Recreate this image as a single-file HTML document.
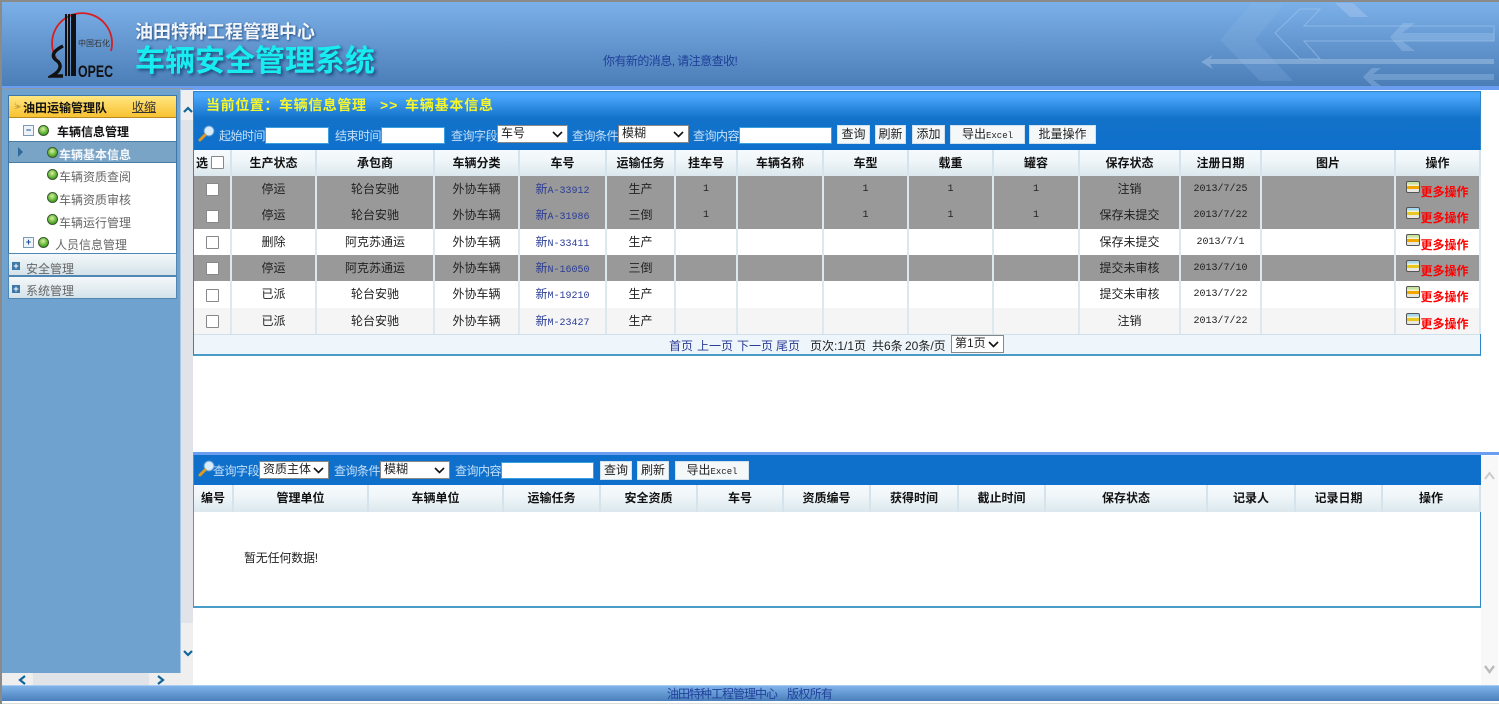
<!DOCTYPE html>
<html lang="zh">
<head>
<meta charset="utf-8">
<title>车辆安全管理系统</title>
<style>
html,body{margin:0;padding:0;background:#fff}
body{width:1499px;height:706px;overflow:hidden;position:relative;font-family:"Liberation Sans","WenQuanYi Zen Hei","Noto Sans CJK SC",sans-serif;font-size:12px;color:#222}
.a{position:absolute;white-space:nowrap}
.t{line-height:16px;height:16px}
table{border-collapse:collapse;table-layout:fixed;position:absolute}
th,td{padding:0 0 2px 0;text-align:center;font-size:12px;overflow:hidden;white-space:nowrap;font-weight:normal}
th{height:26px;background:linear-gradient(#f6fafc,#f0f6f9 40%,#dbe8ee);border-right:2px solid #d5e4ec;font-weight:bold;color:#111;box-sizing:border-box}
td{border-right:2px solid #dbe8f0;box-sizing:border-box}
tr.g td{background:#999;color:#222}
tr.w td{background:#fff}
tr.s td{background:#f5f5f5}
tr td.no{color:#2a3c96;font-size:12px}
.no i{font:normal 10px "Liberation Mono",monospace}
tr td.d{font:10px "Liberation Mono",monospace;padding-bottom:0}
.cb{display:inline-block;width:11px;height:11px;background:#fff;border:1px solid #888;border-radius:1px;vertical-align:middle;position:relative;top:1px}
.more{color:#f00;font-weight:bold;position:relative;top:3px}
.ic{display:inline-block;width:12px;height:10px;border:1px solid #555;border-radius:2px;background:linear-gradient(#c8e4a0 0 25%,#f2f2d0 25% 40%,#f0a800 40% 70%,#e8e8e0 70% 100%);vertical-align:top;position:relative;top:1px}
.ic.b{background:linear-gradient(#a8d8f0 0 25%,#f2f2d0 25% 40%,#e8c820 40% 70%,#e8e8e0 70% 100%)}
.btn{position:absolute;height:17px;line-height:16px;background:#f4f8f8;border:1px solid #cfe0ee;box-sizing:content-box;text-align:center;color:#222}
.inp{position:absolute;height:15px;background:#fff;border:1px solid #3aa0e0}
.sel{position:absolute;height:16px;line-height:14px;background:#fff;border:1px solid #888;padding-left:3px;color:#222;box-sizing:content-box}
.sel svg{position:absolute;right:4px;top:5px}
.lb{position:absolute;color:#c4e0f8;line-height:16px;white-space:nowrap;letter-spacing:-.5px}
.mono{font:9px "Liberation Mono",monospace}
.led{position:absolute;width:9px;height:9px;border-radius:50%;background:radial-gradient(circle at 45% 35%,#d8f09a,#58b030 60%,#2a6a18);border:1px solid #3a5a30}
.m{position:absolute;color:#666;line-height:16px;white-space:nowrap}
.ex{position:absolute;width:9px;height:9px;border:1px solid #7a9ab8;background:#eef3f8;color:#1a4a90;font:bold 9px/8px "Liberation Sans",sans-serif;text-align:center}
.pl{position:absolute;width:8px;height:8px;background:#3f78a8;color:#fff;font:bold 9px/8px "Liberation Sans",sans-serif;text-align:center}
</style>
</head>
<body>

<!-- Header -->
<div class="a" style="left:0;top:0;width:1499px;height:2px;background:#8a8a8a"></div>
<div class="a" style="left:0;top:2px;width:1499px;height:84px;background:linear-gradient(#7cb0e8,#4b7db7)"></div>
<svg class="a" style="left:1100px;top:2px" width="399" height="84" viewBox="0 2 399 84">
<polygon points="152,3 185,3 155,40 193,81 160,81 120,40" fill="#8fb9e8" opacity=".22"/>
<polygon points="235,3 253,3 268,17 250,17" fill="#a8c8f0" opacity=".45"/>
<polygon points="200,9 220,9 204,26 394,26 394,41 204,41 220,59 200,59 175,33" fill="none" stroke="#a5c8ee" stroke-width="1" opacity=".55"/>
<polygon points="101,62 113,55 110,59 394,59 394,64 110,64 113,69" fill="#a5c4e4" opacity=".5"/>
<polygon points="290,37 303,23 315,23 302,33 394,33 394,41 302,41 315,51 302,51" fill="#a5c8ee" opacity=".35"/>
<polygon points="263,77 272,68 281,68 273,74 394,74 394,80 273,80 281,86 272,86" fill="#a5c8ee" opacity=".35"/>
</svg>
<!-- Logo -->
<svg class="a" style="left:48px;top:10px" width="68" height="70" viewBox="0 0 68 70">
<path d="M8 48 A30 30 0 1 1 63 41" fill="none" stroke="#d81e1e" stroke-width="1.8"/>
<rect x="17" y="4" width="2" height="62" fill="#111"/><rect x="20" y="4" width="2" height="62" fill="#111"/><rect x="23" y="4" width="5" height="62" fill="#111"/>
<path d="M15 36 C5 41 3 46 8 50 C14 54 14 60 4 66 L15 66" fill="none" stroke="#111" stroke-width="3.4"/>
<text x="30" y="36" font-size="8" fill="#333" font-family="'Noto Sans CJK SC',sans-serif">中国石化</text>
<text x="30" y="67" font-size="17" font-weight="bold" fill="#111" textLength="35" lengthAdjust="spacingAndGlyphs" font-family="'Liberation Sans',sans-serif">OPEC</text>
</svg>
<div class="a" style="left:135px;top:20px;font-size:18px;line-height:22px;font-weight:bold;color:#f2f6fa;text-shadow:1px 1px 2px #234d80;font-family:'Noto Sans CJK SC',sans-serif">油田特种工程管理中心</div>
<div class="a" style="left:135px;top:39px;font-size:30px;line-height:38px;font-weight:bold;color:#18ecf0;text-shadow:2px 2px 3px #1d4a78;font-family:'Noto Sans CJK SC',sans-serif">车辆安全管理系统</div>
<div class="a t" style="left:603px;top:53px;color:#1f3f9a;letter-spacing:-.55px">你有新的消息, 请注意查收!</div>
<div class="a" style="left:0;top:86px;width:1499px;height:4px;background:#6b9df0"></div>

<!-- Left -->
<div class="a" style="left:0;top:0;width:2px;height:704px;background:#8a8a8a"></div>
<div class="a" style="left:2px;top:88px;width:179px;height:597px;background:#eee"></div>
<div class="a" style="left:2px;top:89px;width:179px;height:584px;background:#70a2cf;border-right:1px solid #a8c8e6;box-sizing:border-box"></div>
<!-- sidebar v scroll -->
<div class="a" style="left:181px;top:90px;width:12px;height:533px;background:#e0e4e8"></div>
<div class="a" style="left:181px;top:623px;width:12px;height:62px;background:#efefef"></div>
<div class="a" style="left:181px;top:90px;width:12px;height:30px;background:#efefef"></div>
<div class="a" style="left:2px;top:88px;width:191px;height:1px;background:#8a98a8"></div>
<svg class="a" style="left:183px;top:106px" width="10" height="8"><path d="M1 6 L5 2 L9 6" fill="none" stroke="#116699" stroke-width="2.2"/></svg>
<svg class="a" style="left:183px;top:649px" width="10" height="8"><path d="M1 2 L5 6 L9 2" fill="none" stroke="#116699" stroke-width="2.2"/></svg>
<!-- sidebar h scroll -->
<div class="a" style="left:33px;top:673px;width:116px;height:12px;background:#e0e4e8"></div>
<svg class="a" style="left:17px;top:675px" width="10" height="11"><path d="M8 1 L3 5 L8 9" fill="none" stroke="#116699" stroke-width="2.2"/></svg>
<svg class="a" style="left:156px;top:675px" width="10" height="11"><path d="M2 1 L7 5 L2 9" fill="none" stroke="#116699" stroke-width="2.2"/></svg>

<!-- sidebar panel -->
<div class="a" style="left:8px;top:95px;width:169px;height:204px;background:#fff;border:1px solid #3f76a8;box-sizing:border-box"></div>
<div class="a" style="left:9px;top:96px;width:167px;height:22px;background:linear-gradient(#ffe680,#f8c232);border-bottom:1px solid #b88a20;box-sizing:border-box"></div>
<div class="a" style="left:14px;top:102px;color:#c8a040;font-size:9px;line-height:9px">⁞▸</div>
<div class="a t" style="left:23px;top:100px;font-weight:bold;color:#111">油田运输管理队</div>
<div class="a t" style="left:132px;top:99px;color:#333;text-decoration:underline">收缩</div>

<div class="ex" style="left:23px;top:125px">−</div>
<div class="led" style="left:38px;top:125px"></div>
<div class="a t" style="left:57px;top:124px;font-weight:bold;color:#111">车辆信息管理</div>

<div class="a" style="left:9px;top:141px;width:167px;height:22px;background:#7aa4c6;border-top:1px solid #4a7ca8;border-bottom:1px solid #4a7ca8;box-sizing:border-box"></div>
<svg class="a" style="left:17px;top:147px" width="7" height="10"><path d="M1 0 L6 5 L1 10Z" fill="#2e6a9e"/></svg>
<div class="led" style="left:47px;top:147px"></div>
<div class="a t" style="left:59px;top:147px;font-weight:bold;color:#f4f8fc">车辆基本信息</div>
<div class="led" style="left:47px;top:169px"></div>
<div class="m" style="left:59px;top:169px">车辆资质查阅</div>
<div class="led" style="left:47px;top:192px"></div>
<div class="m" style="left:59px;top:192px">车辆资质审核</div>
<div class="led" style="left:47px;top:214px"></div>
<div class="m" style="left:59px;top:215px">车辆运行管理</div>
<div class="ex" style="left:23px;top:237px">+</div>
<div class="led" style="left:38px;top:237px"></div>
<div class="m" style="left:55px;top:237px">人员信息管理</div>

<div class="a" style="left:8px;top:253px;width:169px;height:23px;background:linear-gradient(#f4f8fa,#d4e2ea);border:1px solid #4f86b4;box-sizing:border-box"></div>
<div class="pl" style="left:12px;top:262px">+</div>
<div class="m" style="left:26px;top:261px">安全管理</div>
<div class="a" style="left:8px;top:276px;width:169px;height:23px;background:linear-gradient(#f4f8fa,#d4e2ea);border:1px solid #4f86b4;box-sizing:border-box"></div>
<div class="pl" style="left:12px;top:285px">+</div>
<div class="m" style="left:26px;top:283px">系统管理</div>

<!-- Right scrollbar -->
<div class="a" style="left:1481px;top:456px;width:17px;height:229px;background:#f8f8f8"></div>
<svg class="a" style="left:1483px;top:664px" width="13" height="11"><path d="M2 2 L6.5 8 L11 2" fill="none" stroke="#bbb" stroke-width="2.4"/></svg>
<svg class="a" style="left:1483px;top:471px" width="13" height="10"><path d="M2 8 L6.5 2 L11 8" fill="none" stroke="#ccc" stroke-width="2"/></svg>

<!-- Panel 1 -->
<div class="a" style="left:193px;top:91px;width:1288px;height:265px;background:#fff;border:1px solid #2f86c6;border-bottom:2px solid #4a9cc8;box-sizing:border-box"></div>
<div class="a" style="left:194px;top:92px;width:1286px;height:58px;background:linear-gradient(#4aa6fa 0,#4aa6fa 4px,#1272ca 26px,#0f70cc 58px)"></div>
<div class="a" style="left:206px;top:95px;font-size:14px;line-height:20px;font-weight:bold;color:#f6f62a;font-family:'Noto Sans CJK SC',sans-serif;letter-spacing:.6px">当前位置：车辆信息管理</div>
<div class="a" style="left:380px;top:95px;font-size:14px;line-height:20px;font-weight:bold;color:#f6f62a;letter-spacing:1px">&gt;&gt;</div>
<div class="a" style="left:405px;top:95px;font-size:14px;line-height:20px;font-weight:bold;color:#f6f62a;font-family:'Noto Sans CJK SC',sans-serif;letter-spacing:.8px">车辆基本信息</div>

<svg class="a" style="left:198px;top:125px" width="17" height="17" viewBox="0 0 17 17"><circle cx="11" cy="6" r="5" fill="#d8ecfa" stroke="#5a9ad8"/><path d="M7 10 L2 15" stroke="#e09a20" stroke-width="3" stroke-linecap="round"/></svg>
<div class="lb" style="left:219px;top:128px">起始时间</div>
<div class="inp" style="left:265px;top:127px;width:62px"></div>
<div class="lb" style="left:335px;top:128px">结束时间</div>
<div class="inp" style="left:381px;top:127px;width:62px"></div>
<div class="lb" style="left:451px;top:128px">查询字段</div>
<div class="sel" style="left:497px;top:125px;width:66px">车号<svg width="11" height="7"><path d="M1 1 L5.5 5.5 L10 1" fill="none" stroke="#111" stroke-width="1.6"/></svg></div>
<div class="lb" style="left:572px;top:128px">查询条件</div>
<div class="sel" style="left:618px;top:125px;width:66px">模糊<svg width="11" height="7"><path d="M1 1 L5.5 5.5 L10 1" fill="none" stroke="#111" stroke-width="1.6"/></svg></div>
<div class="lb" style="left:693px;top:128px">查询内容</div>
<div class="inp" style="left:739px;top:127px;width:91px"></div>
<div class="btn" style="left:837px;top:125px;width:31px">查询</div>
<div class="btn" style="left:875px;top:125px;width:29px">刷新</div>
<div class="btn" style="left:912px;top:125px;width:31px">添加</div>
<div class="btn" style="left:950px;top:125px;width:73px">导出<span class="mono">Excel</span></div>
<div class="btn" style="left:1029px;top:125px;width:65px">批量操作</div>

<table style="left:194px;top:150px;width:1286px">
<colgroup><col style="width:37px"><col style="width:85px"><col style="width:118px"><col style="width:85px"><col style="width:87px"><col style="width:69px"><col style="width:62px"><col style="width:86px"><col style="width:85px"><col style="width:85px"><col style="width:86px"><col style="width:101px"><col style="width:81px"><col style="width:134px"><col style="width:85px"></colgroup>
<tr><th style="text-align:left;padding-left:2px">选 <span class="cb" style="top:-1px"></span></th><th>生产状态</th><th>承包商</th><th>车辆分类</th><th>车号</th><th>运输任务</th><th>挂车号</th><th>车辆名称</th><th>车型</th><th>载重</th><th>罐容</th><th>保存状态</th><th>注册日期</th><th>图片</th><th>操作</th></tr>
<tr class="g" style="height:26px"><td><span class="cb"></span></td><td>停运</td><td>轮台安驰</td><td>外协车辆</td><td class="no">新<i>A-33912</i></td><td>生产</td><td class="d">1</td><td></td><td class="d">1</td><td class="d">1</td><td class="d">1</td><td>注销</td><td class="d">2013/7/25</td><td></td><td><span class="ic"></span><span class="more">更多操作</span></td></tr>
<tr class="g" style="height:27px"><td><span class="cb"></span></td><td>停运</td><td>轮台安驰</td><td>外协车辆</td><td class="no">新<i>A-31986</i></td><td>三倒</td><td class="d">1</td><td></td><td class="d">1</td><td class="d">1</td><td class="d">1</td><td>保存未提交</td><td class="d">2013/7/22</td><td></td><td><span class="ic b"></span><span class="more">更多操作</span></td></tr>
<tr class="w" style="height:26px"><td><span class="cb"></span></td><td>删除</td><td>阿克苏通运</td><td>外协车辆</td><td class="no">新<i>N-33411</i></td><td>生产</td><td></td><td></td><td></td><td></td><td></td><td>保存未提交</td><td class="d">2013/7/1</td><td></td><td><span class="ic"></span><span class="more">更多操作</span></td></tr>
<tr class="g" style="height:26px"><td><span class="cb"></span></td><td>停运</td><td>阿克苏通运</td><td>外协车辆</td><td class="no">新<i>N-16050</i></td><td>三倒</td><td></td><td></td><td></td><td></td><td></td><td>提交未审核</td><td class="d">2013/7/10</td><td></td><td><span class="ic b"></span><span class="more">更多操作</span></td></tr>
<tr class="w" style="height:27px"><td><span class="cb"></span></td><td>已派</td><td>轮台安驰</td><td>外协车辆</td><td class="no">新<i>M-19210</i></td><td>生产</td><td></td><td></td><td></td><td></td><td></td><td>提交未审核</td><td class="d">2013/7/22</td><td></td><td><span class="ic"></span><span class="more">更多操作</span></td></tr>
<tr class="s" style="height:26px"><td><span class="cb"></span></td><td>已派</td><td>轮台安驰</td><td>外协车辆</td><td class="no">新<i>M-23427</i></td><td>生产</td><td></td><td></td><td></td><td></td><td></td><td>注销</td><td class="d">2013/7/22</td><td></td><td><span class="ic b"></span><span class="more">更多操作</span></td></tr>
</table>
<div class="a" style="left:194px;top:334px;width:1286px;height:20px;background:#eff6fb;border-top:1px solid #cfe0ea;box-sizing:border-box"></div>
<div class="a t" style="left:669px;top:338px;color:#2a3c96">首页</div>
<div class="a t" style="left:697px;top:338px;color:#2a3c96">上一页</div>
<div class="a t" style="left:737px;top:338px;color:#2a3c96">下一页</div>
<div class="a t" style="left:776px;top:338px;color:#2a3c96">尾页</div>
<div class="a t" style="left:810px;top:338px">页次:1/1页</div>
<div class="a t" style="left:872px;top:338px">共6条</div>
<div class="a t" style="left:905px;top:338px">20条/页</div>
<div class="sel" style="left:951px;top:335px;width:48px;border-color:#888">第1页<svg width="11" height="7"><path d="M1 1 L5.5 5.5 L10 1" fill="none" stroke="#111" stroke-width="1.6"/></svg></div>

<!-- Panel 2 -->
<div class="a" style="left:193px;top:452px;width:1288px;height:156px;background:#fff;border-right:1px solid #2f86c6;border-left:1px solid #4a9cc8;border-bottom:2px solid #4a9cc8;box-sizing:border-box"></div>
<div class="a" style="left:193px;top:452px;width:1306px;height:3px;background:#6b9df0"></div>
<div class="a" style="left:194px;top:455px;width:1287px;height:30px;background:#0f70cc"></div>
<svg class="a" style="left:198px;top:460px" width="17" height="17" viewBox="0 0 17 17"><circle cx="11" cy="6" r="5" fill="#d8ecfa" stroke="#5a9ad8"/><path d="M7 10 L2 15" stroke="#e09a20" stroke-width="3" stroke-linecap="round"/></svg>
<div class="lb" style="left:213px;top:463px">查询字段</div>
<div class="sel" style="left:259px;top:461px;width:65px">资质主体<svg width="11" height="7"><path d="M1 1 L5.5 5.5 L10 1" fill="none" stroke="#111" stroke-width="1.6"/></svg></div>
<div class="lb" style="left:334px;top:463px">查询条件</div>
<div class="sel" style="left:380px;top:461px;width:65px">模糊<svg width="11" height="7"><path d="M1 1 L5.5 5.5 L10 1" fill="none" stroke="#111" stroke-width="1.6"/></svg></div>
<div class="lb" style="left:455px;top:463px">查询内容</div>
<div class="inp" style="left:501px;top:462px;width:91px"></div>
<div class="btn" style="left:600px;top:461px;width:30px">查询</div>
<div class="btn" style="left:637px;top:461px;width:30px">刷新</div>
<div class="btn" style="left:675px;top:461px;width:72px">导出<span class="mono">Excel</span></div>

<table style="left:194px;top:485px;width:1286px">
<colgroup><col style="width:39px"><col style="width:135px"><col style="width:135px"><col style="width:97px"><col style="width:97px"><col style="width:86px"><col style="width:87px"><col style="width:88px"><col style="width:87px"><col style="width:162px"><col style="width:88px"><col style="width:87px"><col style="width:98px"></colgroup>
<tr style="height:27px"><th style="height:27px">编号</th><th>管理单位</th><th>车辆单位</th><th>运输任务</th><th>安全资质</th><th>车号</th><th>资质编号</th><th>获得时间</th><th>截止时间</th><th>保存状态</th><th>记录人</th><th>记录日期</th><th>操作</th></tr>
</table>
<div class="a t" style="left:244px;top:550px;color:#222;letter-spacing:-.2px">暂无任何数据!</div>

<!-- Footer -->
<div class="a" style="left:2px;top:685px;width:1497px;height:16px;background:linear-gradient(#7fb2e8,#4a7fbc);border-top:1px solid #a8ccf0;box-sizing:border-box"></div>
<div class="a t" style="left:667px;top:686px;color:#1f3f9a;letter-spacing:-1px">油田特种工程管理中心</div>
<div class="a t" style="left:787px;top:686px;color:#1f3f9a;letter-spacing:-.7px">版权所有</div>
<div class="a" style="left:2px;top:703px;width:1497px;height:1px;background:#ddd"></div>
</body>
</html>
